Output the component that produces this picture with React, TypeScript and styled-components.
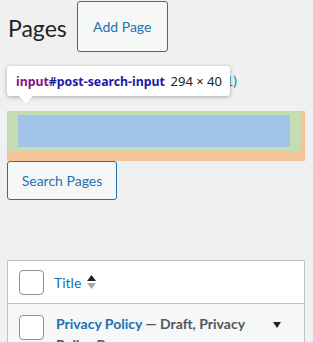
import React from "react";
import styled, { createGlobalStyle } from "styled-components";

const Global = createGlobalStyle`
  html, body { margin: 0; padding: 0; background: #f0f0f1; }
  body { font-family: Lato, "Noto Sans", sans-serif; color: #1d2327; }
  * { box-sizing: border-box; }
`;

const Wrap = styled.div`
  width: 313px;
  height: 342px;
  overflow: hidden;
  padding-left: 7px;
`;

const Header = styled.div`
  display: flex;
  align-items: center;
  padding-top: 1px;
  height: 52px;
`;

const Title = styled.h1`
  margin: 0 10px 0 1px;
  font-size: 23px;
  font-weight: 400;
  line-height: 1.3;
  color: #1d2327;
  padding-top: 4px;
`;

const OutlineButton = styled.button<{ $w: number; $h: number }>`
  width: ${(p) => p.$w}px;
  height: ${(p) => p.$h}px;
  border: 1px solid #2271b1;
  border-radius: 3px;
  background: #f6f7f7;
  color: #2271b1;
  font-family: Lato, "Noto Sans", sans-serif;
  font-size: 14px;
  padding: 0;
  display: flex;
  align-items: center;
  justify-content: center;
`;

const SearchArea = styled.div`
  position: relative;
  padding-top: 21px;
`;

const Subsub = styled.div`
  width: 230px;
  text-align: right;
  font-size: 14px;
  line-height: 16px;
  color: #2271b1;
  height: 38px;
`;

const MarginBox = styled.div`
  width: 298px;
  background: #f3c599;
  padding: 0 4px 10px 0;
`;

const SearchInput = styled.input`
  display: block;
  width: 294px;
  height: 40px;
  margin: 0;
  border: 1px solid #c7d9b0;
  border-radius: 2px;
  padding: 3px 10px;
  background: linear-gradient(#a1c4e8, #a1c4e8) content-box, #c4ddb2;
  outline: none;
`;

const Tooltip = styled.div`
  position: absolute;
  left: 0;
  top: 14px;
  width: 223px;
  height: 30px;
  background: #fff;
  border-radius: 3px;
  box-shadow: 0 1px 4px rgba(0, 0, 0, 0.3);
  display: flex;
  align-items: center;
  padding: 0 8px 0 9px;
  font-family: "Noto Sans", sans-serif;
  font-size: 12.3px;
  &::after {
    content: "";
    position: absolute;
    left: 12px;
    bottom: -7px;
    border-left: 7px solid transparent;
    border-right: 7px solid transparent;
    border-top: 7px solid #fff;
  }
`;

const TipName = styled.span`
  font-weight: 700;
  color: #1a1aa6;
  b { color: #881280; font-weight: 700; }
`;

const TipSize = styled.span`
  margin-left: auto;
  color: #222;
  font-size: 13px;
`;

const Table = styled.div`
  margin-top: 60px;
  width: 298px;
  border: 1px solid #c3c4c7;
  border-bottom: none;
`;

const HeadRow = styled.div`
  display: flex;
  align-items: center;
  height: 43px;
  background: #fff;
  border-bottom: 1px solid #c3c4c7;
  padding-left: 11px;
`;

const Check = styled.span`
  flex: none;
  width: 25px;
  height: 25px;
  border: 1px solid #8c8f94;
  border-radius: 4px;
  background: #fff;
`;

const HeadTitle = styled.span`
  margin-left: 10px;
  font-size: 14px;
  color: #2271b1;
  display: flex;
  align-items: center;
  gap: 6px;
`;

const SortIcon = styled.svg`
  width: 9px;
  height: 14px;
`;

const Row = styled.div`
  display: flex;
  align-items: flex-start;
  background: #f6f7f7;
  padding: 11px 0 0 11px;
  height: 60px;
`;

const RowTitle = styled.div`
  margin: -2px 0 0 12px;
  width: 210px;
  font-size: 14px;
  font-weight: 700;
  line-height: 21px;
  color: #50575e;
  a { color: #2271b1; text-decoration: none; }
`;

const Toggle = styled.span`
  margin: 7px 0 0 7px;
  width: 0;
  height: 0;
  border-left: 4px solid transparent;
  border-right: 4px solid transparent;
  border-top: 6px solid #1d2327;
`;

export default function App() {
  return (
    <Wrap>
      <Global />
      <Header>
        <Title>Pages</Title>
        <OutlineButton $w={91} $h={51}>Add Page</OutlineButton>
      </Header>
      <SearchArea>
        <Subsub>All (1) | Draft (1)</Subsub>
        <MarginBox>
          <SearchInput id="post-search-input" type="search" />
        </MarginBox>
        <Tooltip>
          <TipName>
            <b>input</b>#post-search-input
          </TipName>
          <TipSize>294 × 40</TipSize>
        </Tooltip>
      </SearchArea>
      <OutlineButton $w={110} $h={39}>Search Pages</OutlineButton>
      <Table>
        <HeadRow>
          <Check />
          <HeadTitle>
            Title
            <SortIcon viewBox="0 0 9 14">
              <path d="M4.5 0 L9 6 L0 6 Z" fill="#1d2327" />
              <path d="M0 8 L9 8 L4.5 14 Z" fill="#a7aaad" />
            </SortIcon>
          </HeadTitle>
        </HeadRow>
        <Row>
          <Check />
          <RowTitle>
            <a href="#">Privacy Policy</a> — Draft, Privacy Policy Page
          </RowTitle>
          <Toggle />
        </Row>
      </Table>
    </Wrap>
  );
}
